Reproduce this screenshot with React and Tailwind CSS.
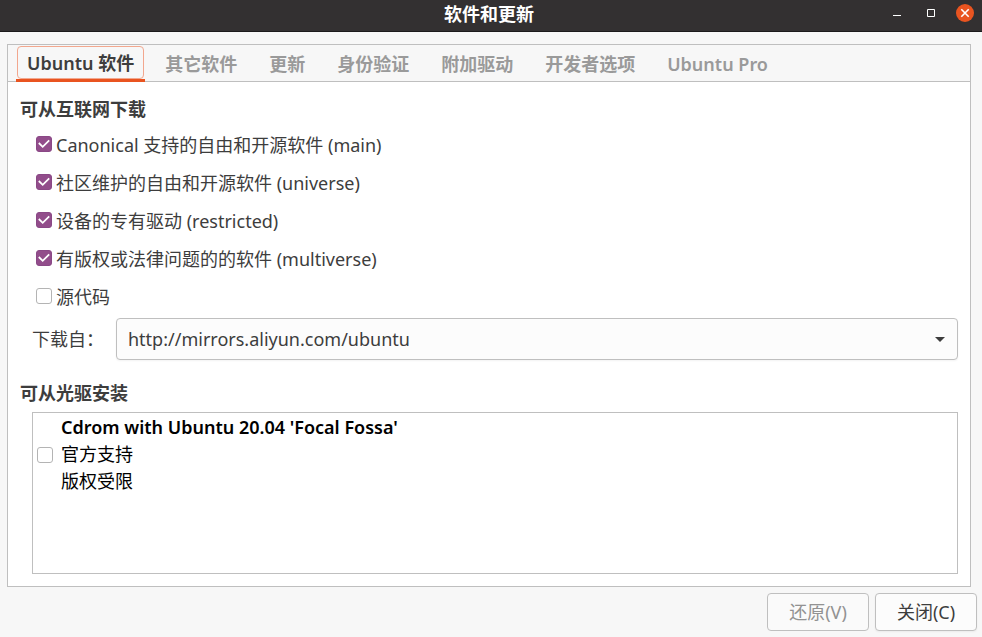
import { useState } from 'react'

const tabs = ['Ubuntu 软件', '其它软件', '更新', '身份验证', '附加驱动', '开发者选项', 'Ubuntu Pro']

const components = [
  { id: 'main', label: 'Canonical 支持的自由和开源软件 (main)', on: true },
  { id: 'universe', label: '社区维护的自由和开源软件 (universe)', on: true },
  { id: 'restricted', label: '设备的专有驱动 (restricted)', on: true },
  { id: 'multiverse', label: '有版权或法律问题的的软件 (multiverse)', on: true },
  { id: 'source', label: '源代码', on: false },
]

function CheckBox({ id, checked, onChange }){
  return (
    <span className="grid size-4 shrink-0">
      <input
        id={id}
        type="checkbox"
        checked={checked}
        onChange={onChange}
        className="peer col-start-1 row-start-1 size-4 appearance-none rounded-[3px] border border-[#b4b4b4] bg-white checked:border-[#8a4886] checked:bg-[#924d8b]"
      />
      <svg viewBox="0 0 16 16" className="pointer-events-none col-start-1 row-start-1 hidden size-4 peer-checked:block" fill="none" stroke="#fff" strokeWidth="1.8">
        <path d="M2.8 7 L6.7 10.8 L13.2 4.4"/>
      </svg>
    </span>
  )
}

function TitleBar(){
  return (
    <header className="grid h-8 grid-cols-[1fr_auto_1fr] items-start border-b border-[#1c1a1b] bg-[#333031] pr-1 text-white">
      <h1 className="col-start-2 text-lg leading-7 font-bold">软件和更新</h1>
      <div className="flex items-center justify-end gap-4 pt-1 pr-1">
        <button aria-label="最小化" className="size-[18px]">
          <svg viewBox="0 0 18 18" className="size-[18px]"><path d="M5 11h8v1H5z" fill="#fff"/></svg>
        </button>
        <button aria-label="最大化" className="size-[18px]">
          <svg viewBox="0 0 18 18" className="size-[18px]"><path d="M5.5 5.5h7v7h-7z" fill="none" stroke="#fff"/></svg>
        </button>
        <button aria-label="关闭窗口" className="size-[18px] rounded-full bg-[#e95420]">
          <svg viewBox="0 0 18 18" className="size-[18px]"><path d="M5.3 5.3l7.4 7.4M12.7 5.3l-7.4 7.4" fill="none" stroke="#fff" strokeWidth="1.6"/></svg>
        </button>
      </div>
    </header>
  )
}

export default function App(){
  const [tab, setTab] = useState(0)
  const [enabled, setEnabled] = useState(() => Object.fromEntries(components.map(c => [c.id, c.on])))
  const [cdrom, setCdrom] = useState(false)

  function toggle(id){
    setEnabled(e => ({ ...e, [id]: !e[id] }))
  }

  return (
    <div className="flex min-h-screen flex-col bg-[#f7f7f7] font-['Noto_Sans','Noto_Sans_CJK_SC',sans-serif] text-lg leading-7 text-[#3d3d3d]">
      <TitleBar/>

      <main className="mt-3 mr-[11px] ml-[7px] flex flex-1 flex-col border border-[#bfbfbf] bg-white">
        <div role="tablist" className="flex h-[37px] gap-2 border-b border-[#bfbfbf] bg-[#f7f7f7] px-2">
          {tabs.map((t, i) => (
            <button
              key={t}
              role="tab"
              aria-selected={i === tab}
              onClick={() => setTab(i)}
              className={i === tab
                ? 'flex h-[37px] border-b-3 border-[#e95420] px-px pt-px font-semibold whitespace-nowrap'
                : 'h-[37px] px-3 font-semibold whitespace-nowrap text-[#9a9a9a]'}
            >
              {i === tab ? (
                <span className="flex h-[33px] items-center rounded border border-[#f2a78e] px-[9px] pt-px">{t}</span>
              ) : t}
            </button>
          ))}
        </div>

        <div className="flex flex-1 flex-col px-3 pt-[13px] pb-3">
          <h2 className="font-bold">可从互联网下载</h2>
          <div className="pt-[2px] pl-4">
            {components.map(c => (
              <div key={c.id} className="flex h-[38px] items-center gap-1">
                <CheckBox id={c.id} checked={enabled[c.id]} onChange={() => toggle(c.id)}/>
                <label htmlFor={c.id} className="pt-[2px]">{c.label}</label>
              </div>
            ))}
          </div>

          <div className="mt-[3px] flex items-center pl-3">
            <label htmlFor="server" className="w-[84px] shrink-0">下载自：</label>
            <div className="grid flex-1 items-center">
              <select id="server" className="col-start-1 row-start-1 h-[42px] w-full appearance-none rounded border border-[#bfbfbf] bg-[#fcfcfc] px-[11px] shadow-xs">
                <option>http://mirrors.aliyun.com/ubuntu</option>
              </select>
              <svg viewBox="0 0 10 5" className="pointer-events-none col-start-1 row-start-1 mr-[13px] h-[5px] w-[10px] justify-self-end"><path d="M0 0h10L5 5z" fill="#3d3d3d"/></svg>
            </div>
          </div>

          <h2 className="mt-[19px] font-bold">可从光驱安装</h2>
          <div className="mt-[5px] ml-3 flex-1 border border-[#bfbfbf] bg-white px-1 pt-px text-black">
            <div className="flex items-center gap-2">
              <CheckBox id="cdrom" checked={cdrom} onChange={() => setCdrom(v => !v)}/>
              <label htmlFor="cdrom" className="leading-[27px]">
                <span className="font-semibold">Cdrom with Ubuntu 20.04 'Focal Fossa'</span><br/>
                官方支持<br/>
                版权受限
              </label>
            </div>
          </div>
        </div>
      </main>

      <footer className="flex justify-end gap-[6px] py-[6px] pr-[5px]">
        <button disabled className="h-[38px] w-[102px] rounded border border-[#bfbfbf] bg-[#fafafa] text-[#929292]">还原(V)</button>
        <button className="h-[38px] w-[102px] rounded border border-[#bfbfbf] bg-[#fcfcfc] shadow-xs">关闭(C)</button>
      </footer>
    </div>
  )
}
